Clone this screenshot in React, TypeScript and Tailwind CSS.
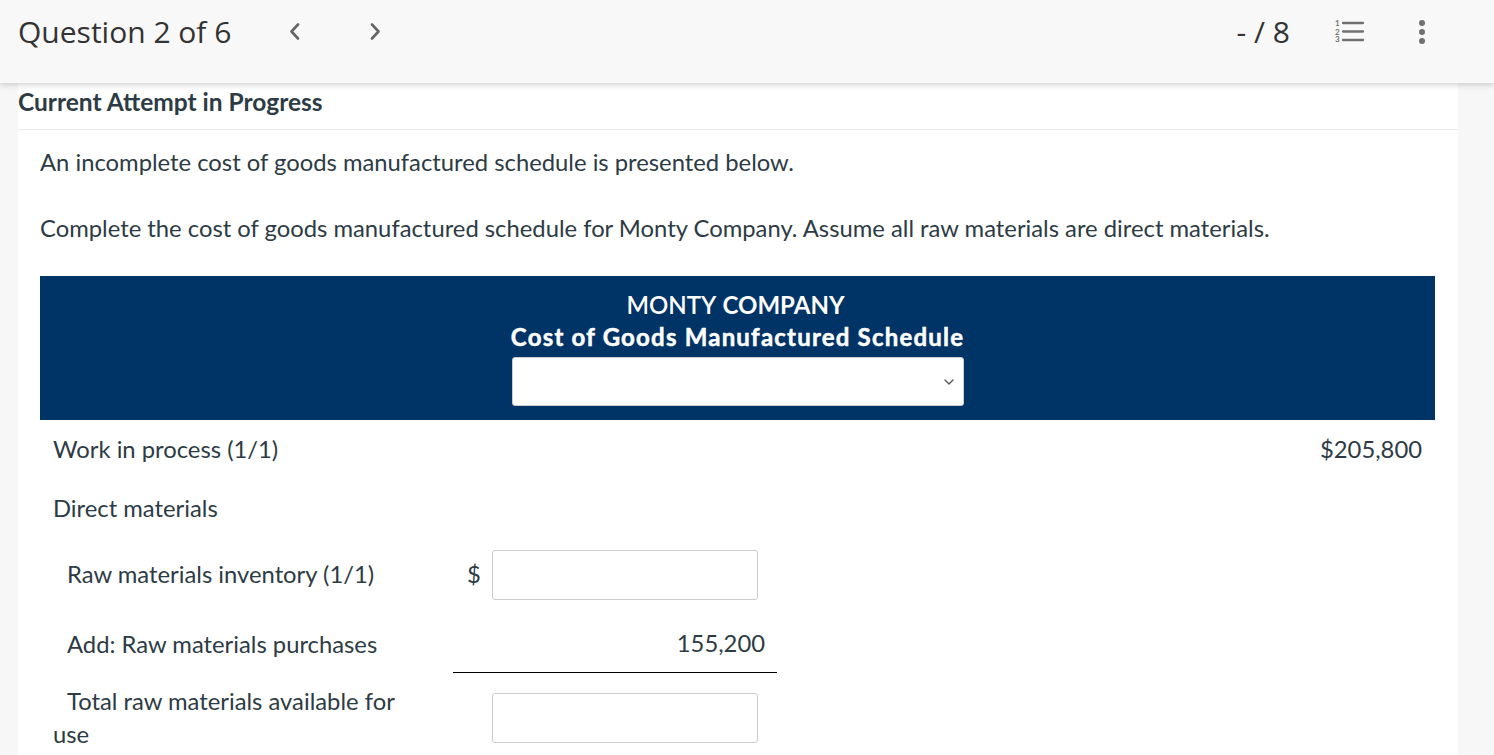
import React from "react";
import { ChevronDown } from "lucide-react";

const ListIcon = () => (
  <svg width="29" height="27" viewBox="0 -2 29 27" className="text-[#707070] overflow-visible">
    <text x="0" y="6" fontSize="8" fontFamily="Lato, sans-serif" fontWeight="700" fill="currentColor">1</text>
    <text x="0" y="14.5" fontSize="8" fontFamily="Lato, sans-serif" fontWeight="700" fill="currentColor">2</text>
    <text x="0" y="22" fontSize="8" fontFamily="Lato, sans-serif" fontWeight="700" fill="currentColor">3</text>
    <g stroke="currentColor" strokeWidth="2.3" strokeLinecap="round">
      <line x1="8" y1="3" x2="28" y2="3" />
      <line x1="8" y1="11.5" x2="28" y2="11.5" />
      <line x1="8" y1="20" x2="28" y2="20" />
    </g>
  </svg>
);

const Chevron = ({ dir }: { dir: "left" | "right" }) => (
  <svg width="12" height="17" viewBox="0 0 12 17" className="text-[#666]">
    <polyline
      points={dir === "left" ? "9,1.5 2.5,8.5 9,15.5" : "3,1.5 9.5,8.5 3,15.5"}
      fill="none"
      stroke="currentColor"
      strokeWidth="2.6"
      strokeLinecap="round"
      strokeLinejoin="round"
    />
  </svg>
);

const TextInput = () => (
  <input
    type="text"
    className="w-[266px] h-[50px] border border-[#cccccc] rounded-[3px] bg-white outline-none"
  />
);

export default function App() {
  return (
    <div className="min-h-[755px] bg-[#f7f7f7] font-['Lato',sans-serif] text-[#2d3b45] overflow-hidden">
      {/* Top bar */}
      <header className="h-[83px] bg-[#f8f8f8] shadow-[0_2px_6px_rgba(0,0,0,0.18)] relative z-10 flex items-center pl-[18px] pr-[69px] pb-[20px] font-['Open_Sans',sans-serif] text-[#333]">
        <h1 className="text-[30px] font-normal leading-none">Question 2 of 6</h1>
        <div className="flex items-center ml-[58px] gap-[68px]">
          <Chevron dir="left" />
          <Chevron dir="right" />
        </div>
        <div className="ml-auto flex items-center">
          <span className="text-[30px] leading-none">- / 8</span>
          <span className="ml-[45px] flex">
            <ListIcon />
          </span>
          <span className="ml-[55px] flex flex-col gap-[3px]">
            <span className="w-[6px] h-[6px] rounded-full bg-[#707070]" />
            <span className="w-[6px] h-[6px] rounded-full bg-[#707070]" />
            <span className="w-[6px] h-[6px] rounded-full bg-[#707070]" />
          </span>
        </div>
      </header>

      {/* Content panel */}
      <main className="ml-[18px] w-[1440px] bg-white min-h-[672px]">
        <div className="h-[47px] flex items-start border-b border-[#ececec] pt-[3px]">
          <h2 className="text-[24.5px] leading-[32px] font-bold text-[#2d3b45]">Current Attempt in Progress</h2>
        </div>

        <div className="px-[22px] text-[23.8px]">
          <p className="pt-[17px] leading-[30px]">An incomplete cost of goods manufactured schedule is presented below.</p>
          <p className="pt-[36px] leading-[30px]">
            Complete the cost of goods manufactured schedule for Monty Company. Assume all raw materials are direct materials.
          </p>

          {/* Schedule */}
          <div className="mt-[33px] w-[1395px]">
            <div className="h-[144px] bg-[#003366] flex flex-col items-center pt-[14px] text-white">
              <div className="text-[24px] leading-[30px] pr-[4px]">
                <span className="font-semibold">MONTY</span> <span className="font-bold">COMPANY</span>
              </div>
              <div className="text-[24px] leading-[34px] font-bold tracking-[1.2px] [-webkit-text-stroke:0.5px_white]">
                Cost of Goods Manufactured Schedule
              </div>
              <div className="mt-[3px] w-[452px] h-[49px] bg-white rounded-[3px] border border-[#cccccc] flex items-center justify-end pr-[6px] text-[#555]">
                <ChevronDown size={16} strokeWidth={2} />
              </div>
            </div>

            <div>
              <div className="h-[60px] flex items-center">
                <div className="pl-[13px]">Work in process (1/1)</div>
                <div className="ml-auto pr-[13px]">$205,800</div>
              </div>
              <div className="h-[57px] flex items-center">
                <div className="pl-[13px]">Direct materials</div>
              </div>
              <div className="h-[76px] grid grid-cols-[413px_324px_1fr] items-center">
                <div className="pl-[27px] pr-[20px]">Raw materials inventory (1/1)</div>
                <div className="flex items-center pl-[14px]">
                  <span className="w-[25px]">$</span>
                  <TextInput />
                </div>
                <div />
              </div>
              <div className="h-[60px] grid grid-cols-[413px_324px_1fr] items-center">
                <div className="pl-[27px] pr-[20px] pt-[3px]">Add: Raw materials purchases</div>
                <div className="h-full border-b border-black flex items-center justify-end pr-[12px] pt-[3px]">155,200</div>
                <div />
              </div>
              <div className="grid grid-cols-[413px_324px_1fr] items-start pt-[20px]">
                <div className="pl-[13px] pr-[20px] indent-[14px] leading-[33px] -mt-[8px]">Total raw materials available for use</div>
                <div className="flex items-center pl-[39px]">
                  <TextInput />
                </div>
                <div />
              </div>
            </div>
          </div>
        </div>
      </main>
    </div>
  );
}
